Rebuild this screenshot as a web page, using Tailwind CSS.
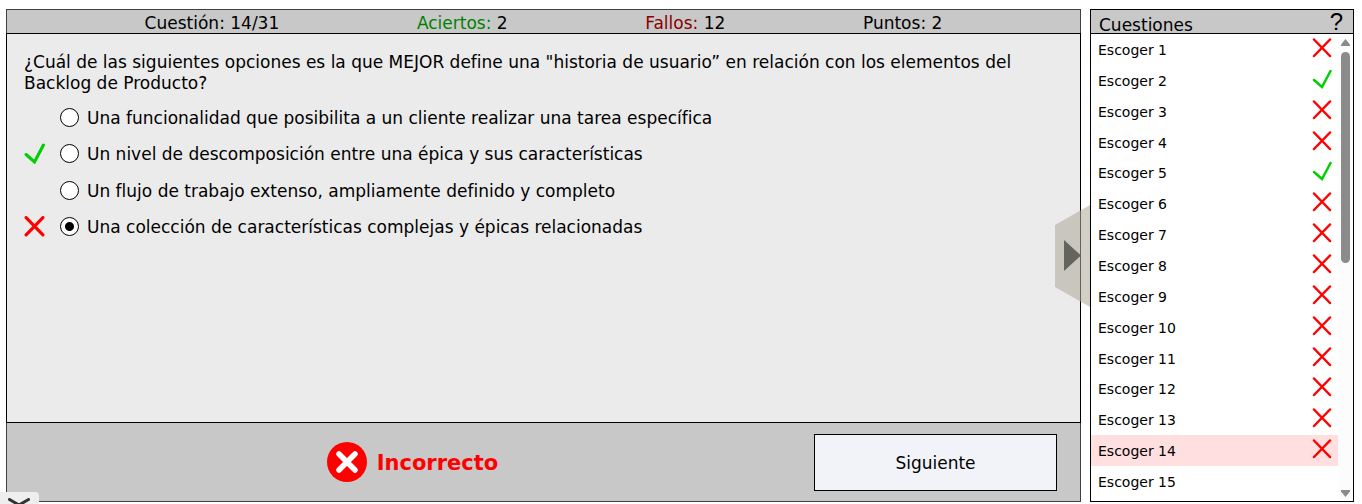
<!DOCTYPE html>
<html lang="es">
<head>
<meta charset="utf-8">
<meta name="viewport" content="width=device-width, initial-scale=1">
<title>Cuestionario</title>
<script src="https://cdn.jsdelivr.net/npm/@tailwindcss/browser@4"></script>
</head>
<body class="relative flex h-screen overflow-hidden bg-white pt-[9px] pr-2 pb-0.5 pl-1.5 font-['Verdana','DejaVu_Sans',sans-serif] text-[17px] text-black">
<svg class="hidden" aria-hidden="true">
  <symbol id="cross" viewBox="0 0 20 20"><path d="M2 1.500 L18 18 M18 1.500 L2 18" fill="none" stroke="#f00" stroke-linecap="round"/></symbol>
  <symbol id="tick" viewBox="0 0 20 20"><path d="M2 11 L10 18 L18.500 2" fill="none" stroke="#00cf00" stroke-linecap="round"/></symbol>
</svg>

<main class="relative mr-[9px] flex min-w-0 flex-1 flex-col border border-[#404040] bg-[#c8c8c8]">
  <header class="flex h-[23px] items-center justify-evenly pt-0.5 leading-5">
    <div>Cuestión: 14/31</div>
    <div><span class="text-[#008000]">Aciertos:</span> 2</div>
    <div><span class="text-[#8b0000]">Fallos:</span> 12</div>
    <div>Puntos: 2</div>
  </header>

  <section class="-mx-px flex-1 border border-black bg-[#ebebeb] px-[17px] pt-[18px]">
    <fieldset>
      <legend class="leading-[21px]">¿Cuál de las siguientes opciones es la que MEJOR define una "historia de usuario” en relación con los elementos del Backlog de Producto?</legend>
      <div class="mt-[5px] grid h-[146px] grid-rows-4">
        <div class="flex items-center">
          <span class="w-9"></span>
          <input id="o1" type="radio" name="r" class="size-[19px] appearance-none rounded-full border border-black bg-white">
          <label for="o1" class="pt-0.5 pl-2">Una funcionalidad que posibilita a un cliente realizar una tarea específica</label>
        </div>
        <div class="flex items-center">
          <span class="w-9"><svg class="size-[21px] stroke-3" role="img" aria-label="Correcta"><use href="#tick"/></svg></span>
          <input id="o2" type="radio" name="r" class="size-[19px] appearance-none rounded-full border border-black bg-white">
          <label for="o2" class="pt-0.5 pl-2">Un nivel de descomposición entre una épica y sus características</label>
        </div>
        <div class="flex items-center">
          <span class="w-9"></span>
          <input id="o3" type="radio" name="r" class="size-[19px] appearance-none rounded-full border border-black bg-white">
          <label for="o3" class="pt-0.5 pl-2">Un flujo de trabajo extenso, ampliamente definido y completo</label>
        </div>
        <div class="flex items-center">
          <span class="w-9"><svg class="size-[21px] stroke-3" role="img" aria-label="Incorrecta"><use href="#cross"/></svg></span>
          <input id="o4" type="radio" name="r" checked class="size-[19px] appearance-none rounded-full border border-black bg-white bg-[radial-gradient(circle,#000_4px,transparent_5px)]">
          <label for="o4" class="pt-0.5 pl-2">Una colección de características complejas y épicas relacionadas</label>
        </div>
      </div>
    </fieldset>
  </section>

  <footer class="flex h-[78px] items-center pr-[23px]">
    <div class="flex flex-1 items-center justify-center gap-2.5 pl-1 text-[21px] font-bold text-[#f00]">
      <svg class="size-10" viewBox="0 0 40 40" aria-hidden="true"><circle cx="20" cy="20" r="20" fill="#f00"/><path d="M12 12 L28 28 M28 12 L12 28" stroke="#fff" stroke-width="5.500" stroke-linecap="round"/></svg>
      <span class="pt-1">Incorrecto</span>
    </div>
    <button type="button" class="h-[57px] w-[243px] border border-black bg-[#f1f3f8] pt-1">Siguiente</button>
  </footer>

  <button type="button" aria-label="Ocultar cuestiones" class="absolute top-[195px] -right-[10px] h-[102px] w-[35px]">
    <svg class="size-full" viewBox="0 0 35 102"><path d="M0 20 L35 0 V102 L0 82 Z" fill="#b0ab9d" fill-opacity=".57"/><path d="M9 35 L26 50.500 L9 66 Z" fill="#64645f"/></svg>
  </button>
</main>

<aside class="flex w-[264px] flex-col border border-black bg-white">
  <header class="flex h-6 items-center justify-between border-b border-black bg-[#c8c8c8] pr-2.5 pl-2">
    <h2 class="pt-2">Cuestiones</h2>
    <button type="button" aria-label="Ayuda" class="font-['Liberation_Sans',sans-serif] text-2xl leading-6">?</button>
  </header>
  <div class="flex min-h-0 flex-1">
    <ol id="list" class="mb-1 flex flex-1 flex-col text-sm"></ol>
    <div class="flex w-[15px] flex-col items-center bg-[#fcfcfc] pt-[5px] pb-1" aria-hidden="true">
      <svg class="h-[7px] w-[9px] shrink-0" viewBox="0 0 9 7"><path d="M4.500 0 L9 5.500 V7 H0 V5.500 Z" fill="#8b8b8b"/></svg>
      <div class="mt-1.5 h-[211px] w-[9px] rounded-full bg-[#8b8b8b]"></div>
      <svg class="mt-auto h-[7px] w-[9px] shrink-0" viewBox="0 0 9 7"><path d="M4.500 7 L9 1.500 V0 H0 V1.500 Z" fill="#8b8b8b"/></svg>
    </div>
  </div>
</aside>

<button type="button" aria-label="Desplegar" class="absolute bottom-0 left-0 h-3 w-[39px] overflow-hidden rounded-tr-sm bg-[#eee]">
  <svg class="absolute top-1.5 left-2 h-3 w-[22px]" viewBox="0 0 22 12"><path d="M1.500 1.500 L11 7 L20.500 1.500" fill="none" stroke="#333" stroke-width="3" stroke-linecap="round"/></svg>
</button>

<script>
const marks = 'XVXXVXXXXXXXXX-';
document.getElementById('list').innerHTML = [...marks].map((m, i) => `
  <li class="flex min-h-0 flex-1 ${i === 13 ? 'bg-[#ffdfdf]' : ''}">
    <a href="#" class="flex flex-1 items-start justify-between pt-1 pr-1.5 pl-[7px]">
      <span class="leading-6">Escoger ${i + 1}</span>
      ${m === '-' ? '' : `<svg class="size-5 stroke-[2.5px]" role="img" aria-label="${m === 'X' ? 'Fallo' : 'Acierto'}"><use href="#${m === 'X' ? 'cross' : 'tick'}"/></svg>`}
    </a>
  </li>`).join('');
</script>
</body>
</html>
